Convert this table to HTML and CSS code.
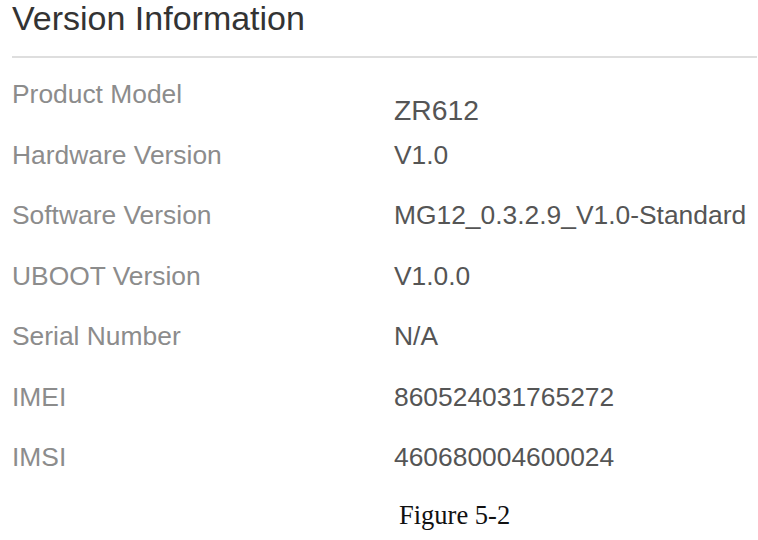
FILE: index.html
```html
<!DOCTYPE html>
<html>
<head>
<meta charset="utf-8">
<link rel="stylesheet" href="styles.css">
</head>
<body>
<div class="page">
  <h1 class="title">Version Information</h1>
  <div class="rule"></div>
  <div class="table">
    <div class="row"><div class="label">Product Model</div><div class="value model">ZR612</div></div>
    <div class="row"><div class="label">Hardware Version</div><div class="value">V1.0</div></div>
    <div class="row"><div class="label">Software Version</div><div class="value">MG12_0.3.2.9_V1.0-Standard</div></div>
    <div class="row"><div class="label">UBOOT Version</div><div class="value">V1.0.0</div></div>
    <div class="row"><div class="label">Serial Number</div><div class="value">N/A</div></div>
    <div class="row"><div class="label">IMEI</div><div class="value">860524031765272</div></div>
    <div class="row"><div class="label">IMSI</div><div class="value">460680004600024</div></div>
  </div>
  <div class="caption">Figure 5-2</div>
</div>
</body>
</html>
```

FILE: styles.css
```css
html, body {
  margin: 0;
  padding: 0;
  background: #ffffff;
}
.page {
  width: 758px;
  height: 540px;
  overflow: hidden;
  font-family: "Liberation Sans", Arial, sans-serif;
  padding-left: 12px;
  box-sizing: border-box;
}
.title {
  margin: 0;
  font-size: 34px;
  font-weight: normal;
  line-height: 36px;
  color: #333333;
  height: 56px;
}
.rule {
  height: 2px;
  background: #dedede;
  margin-right: 1px;
}
.table {
  display: flex;
  flex-direction: column;
  padding-top: 6px;
}
.row {
  display: grid;
  grid-template-columns: 382px 1fr;
  height: 60.5px;
  font-size: 26.4px;
  line-height: 60px;
}
.label {
  color: #8c8c8c;
}
.value {
  color: #555555;
}
.value.model {
  font-size: 28.3px;
  padding-top: 16px;
  line-height: 60px;
  height: 44px;
}
.caption {
  font-family: "Liberation Serif", "Times New Roman", serif;
  font-size: 26.5px;
  color: #111111;
  margin-left: 387px;
  margin-top: 12px;
  line-height: 30px;
}
```
